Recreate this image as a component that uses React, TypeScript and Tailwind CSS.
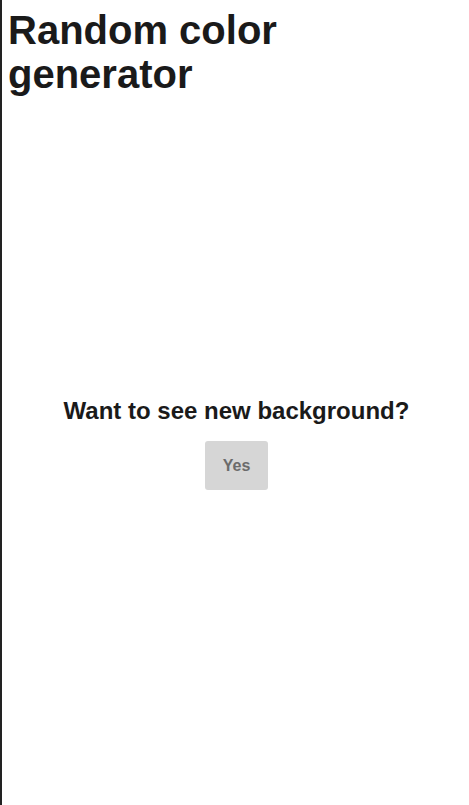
export default function App() {
  return (
    <div
      className="flex min-h-screen flex-col border-l-2 border-[#222222] bg-white pl-[6px] text-[#1a1a1a]"
      style={{ fontFamily: '"Liberation Sans", Arial, sans-serif' }}
    >
      <h1 className="mt-[8px] text-[40px] font-bold leading-[44px]">
        Random color
        <br />
        generator
      </h1>

      <div className="flex flex-1 flex-col items-center justify-center pr-[4px] pb-[14px]">
        <h2 className="text-[24px] font-bold leading-[28px]">Want to see new background?</h2>
        <button className="mt-[16px] h-[49px] w-[63px] rounded-[3px] bg-[#d6d6d6] text-[16px] font-bold text-[#6b6b6b]">
          Yes
        </button>
      </div>
    </div>
  );
}
